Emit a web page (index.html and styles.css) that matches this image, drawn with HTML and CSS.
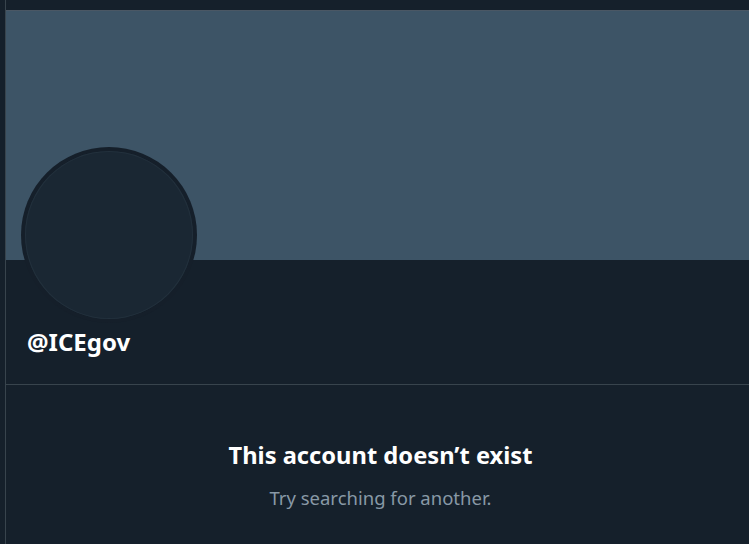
FILE: index.html
```html
<!DOCTYPE html>
<html lang="en">
<head>
<meta charset="utf-8">
<title>@ICEgov</title>
<link rel="stylesheet" href="styles.css">
</head>
<body>
<main class="column">
  <div class="banner"></div>
  <section class="profile">
    <div class="avatar"><div class="avatar-inner"></div></div>
    <div class="handle">@ICEgov</div>
  </section>
  <section class="empty">
    <h1 class="empty-title">This account doesn’t exist</h1>
    <p class="empty-sub">Try searching for another.</p>
  </section>
</main>
</body>
</html>
```
FILE: styles.css
```css
html, body {
  margin: 0;
  padding: 0;
  background: #15202b;
  overflow: hidden;
  height: 100%;
}
body {
  font-family: "Noto Sans", "Open Sans", "DejaVu Sans", sans-serif;
  color: #ffffff;
}
.column {
  margin-left: 5px;
  width: 750px;
  min-height: 100%;
  border-left: 1px solid #38444d;
  padding-top: 10px;
  box-sizing: border-box;
}
.banner {
  height: 249px;
  background: #3d5466;
  border-top: 1px solid #4a5764;
}
.profile {
  display: flex;
  flex-direction: column;
  align-items: flex-start;
  padding: 0 15px;
  border-bottom: 1px solid #38444d;
  height: 125px;
  box-sizing: border-box;
}
.avatar {
  width: 176px;
  height: 176px;
  margin-top: -113px;
  border-radius: 50%;
  background: #151f2a;
  padding: 4px;
  box-sizing: border-box;
  flex: none;
}
.avatar-inner {
  width: 100%;
  height: 100%;
  border-radius: 50%;
  background: #1a2733;
  box-shadow: inset 0 0 0 1px #22303c;
}
.handle {
  margin-top: 4px;
  margin-left: 6px;
  font-size: 24px;
  font-weight: 700;
  line-height: 30px;
}
.empty {
  text-align: center;
  padding-top: 55px;
}
.empty-title {
  margin: 0;
  font-size: 23.7px;
  font-weight: 700;
  line-height: 30px;
}
.empty-sub {
  margin: 16px 0 0;
  font-size: 18.5px;
  line-height: 24px;
  color: #8899a6;
}
```
